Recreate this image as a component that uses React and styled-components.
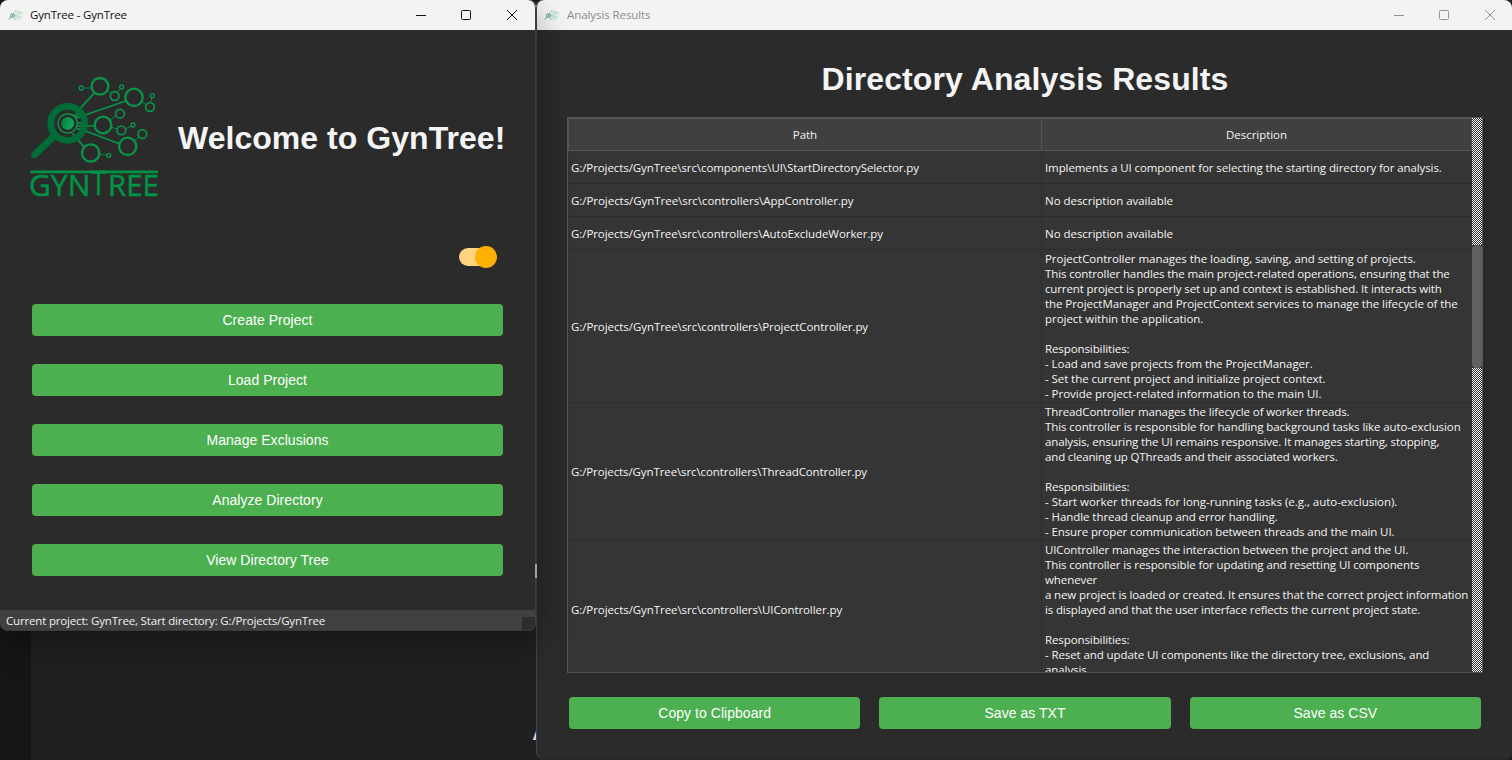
import React from "react";
import styled, { createGlobalStyle, css } from "styled-components";

const GlobalStyle = createGlobalStyle`
  * { box-sizing: border-box; }
  body { margin: 0; background: #202020; overflow: hidden; }
`;

const uiFont = css`
  font-family: "Open Sans", "Noto Sans", sans-serif;
  font-size: 11.5px;
`;

const Desktop = styled.div`
  position: relative;
  width: 1512px;
  height: 760px;
  overflow: hidden;
  background: linear-gradient(90deg, #161616 31px, #202020 31px);
`;

const BackgroundLetter = styled.div`
  position: absolute;
  left: 532px;
  top: 714px;
  font: bold 28px/34px "Liberation Sans", sans-serif;
  color: #cfcfcf;
`;

const BackgroundScroll = styled.div`
  position: absolute;
  left: 535px;
  top: 564px;
  width: 2px;
  height: 14px;
  background: #a0a0a0;
`;

const Window = styled.section`
  position: absolute;
  top: 0;
  display: flex;
  flex-direction: column;
  overflow: hidden;
  border-radius: 8px;
  background: #2b2b2b;

  &::after {
    content: "";
    position: absolute;
    inset: 0;
    border-radius: 8px;
    pointer-events: none;
  }
`;

const MainWindow = styled(Window)`
  left: 0;
  width: 536px;
  height: 631px;
  box-shadow: 0 12px 32px rgba(0, 0, 0, 0.36);

  &::after {
    border-right: 1px solid #3f3f3f;
    border-bottom: 1px solid #3b3b3b;
  }
`;

const ResultsWindow = styled(Window)`
  left: 536px;
  width: 976px;
  height: 760px;

  &::after {
    border-left: 1px solid #444;
    border-bottom: 1px solid #2a2224;
  }
`;

const TitleBar = styled.header`
  display: flex;
  align-items: center;
  flex: none;
  height: 30px;
  padding: 0 ${(p) => (p.$active ? 19 : 17)}px 0 8px;
  background: #f3f3f3;
  color: ${(p) => (p.$active ? "#111" : "#8c8c8c")};
`;

const TitleText = styled.span`
  ${uiFont}
  flex: 1;
  margin-left: ${(p) => p.$gap}px;
  line-height: 30px;
  height: 30px;
  letter-spacing: ${(p) => p.$track}px;
  white-space: pre;
`;

const WindowControls = styled.svg`
  display: block;
  width: 103px;
  height: 12px;
  margin-bottom: 1px;
  fill: none;
  stroke: ${(p) => (p.$active ? "#111" : "#929292")};
`;

const Hero = styled.div`
  display: flex;
  align-items: center;
  height: 140px;
  margin: 35px 0 0 20px;
`;

const LogoArt = styled.svg`
  display: block;
  width: ${(p) => p.$w}px;
  height: ${(p) => p.$h}px;
  flex: none;
`;

const Heading = styled.h1`
  margin: 0;
  font: bold 32px/40px "Liberation Sans", Arial, sans-serif;
  color: #f4f4f4;
  white-space: nowrap;
`;

const HeroHeading = styled(Heading)`
  margin: 5px 0 0 8px;
  letter-spacing: 0.04px;
`;

const ToggleRow = styled.div`
  display: flex;
  justify-content: flex-end;
  height: 99px;
  padding: 41px 39px 0 0;
`;

const Toggle = styled.div`
  display: flex;
  height: 22px;
`;

const ToggleTrack = styled.div`
  width: 36px;
  height: 18px;
  margin: 2px -20px 0 0;
  border-radius: 9px;
  background: #ffd37f;
`;

const ToggleKnob = styled.div`
  width: 22px;
  height: 22px;
  border-radius: 50%;
  background: #ffb000;
`;

const Button = styled.button`
  height: 32px;
  padding: 0;
  border: 0;
  border-radius: 4px;
  background: #4caf50;
  color: #fff;
  font: 14px/32px "Liberation Sans", Arial, sans-serif;
  letter-spacing: 0.04px;
`;

const ActionList = styled.nav`
  display: flex;
  flex-direction: column;
  gap: 28px;
  padding: 0 33px 0 32px;
`;

const StatusBar = styled.footer`
  ${uiFont}
  display: flex;
  justify-content: space-between;
  align-items: flex-end;
  height: 21px;
  margin-top: auto;
  padding: 0 1px 1px 6px;
  line-height: 19px;
  letter-spacing: -0.17px;
  color: #f0f0f0;
  background: #414141;
  white-space: pre;
`;

const SizeGrip = styled.div`
  width: 13px;
  height: 13px;
  background: #2d2d2d;
`;

const ResultsBody = styled.main`
  display: flex;
  flex-direction: column;
  flex: 1;
  padding: 29px 29px 31px 31px;
`;

const ResultsHeading = styled(Heading)`
  text-align: center;
  letter-spacing: 0.1px;
`;

const TableFrame = styled.div`
  display: flex;
  flex: none;
  height: 556px;
  margin-top: 18px;
  border: 1px solid #555;
  background: #353535;
`;

const Table = styled.div`
  flex: 1;
  height: 554px;
  overflow: hidden;
  color: #f4f4f4;
  ${uiFont}
`;

const TableRow = styled.div`
  display: grid;
  grid-template-columns: 474px 430px;
  height: ${(p) => p.$h}px;
`;

const HeaderCell = styled.div`
  display: flex;
  align-items: center;
  justify-content: center;
  padding-bottom: 1px;
  border: solid #555;
  border-width: 1px 1px 1px ${(p) => (p.$first ? 1 : 0)}px;
  background: #404040;
  letter-spacing: -0.05px;
`;

const Cell = styled.div`
  display: flex;
  flex-direction: column;
  justify-content: ${(p) => (p.$top ? "flex-start" : "center")};
  min-width: 0;
  overflow: hidden;
  padding: ${(p) => (p.$top ? "1px" : "0")} 0 0 3px;
  border-bottom: 1px solid #2d2d2d;
  border-right: ${(p) => (p.$last ? 0 : 1)}px solid #2d2d2d;
`;

const Line = styled.div`
  flex: none;
  height: 15px;
  line-height: 15px;
  letter-spacing: ${(p) => p.$track - 0.014}px;
  white-space: pre;
`;

const ScrollTrack = styled.div`
  width: 10px;
  height: 554px;
  padding-top: 127px;
  background: repeating-conic-gradient(#2b2b2b 0 25%, #fff 0 50%) 0 0 / 2px 2px;
`;

const ScrollThumb = styled.div`
  height: 123px;
  background: #2b2b2b;

  &::before {
    content: "";
    display: block;
    height: 100%;
    border-radius: 4px;
    background: #606060;
  }
`;

const ExportRow = styled.div`
  display: grid;
  grid-template-columns: repeat(3, 1fr);
  gap: 19px;
  margin-top: 24px;
  padding: 0 2px;
`;

const nodes = [
  [240, 64, 25, 7], [184, 69, 6, 4], [284, 93, 13, 5], [305, 66, 6, 4],
  [342, 97, 26, 7], [390, 126, 13, 5], [397, 92, 6, 4],
  [249, 180, 25, 7], [300, 146, 13, 5], [304, 196, 13, 5], [339, 180, 6, 4],
  [323, 244, 26, 7], [367, 207, 13, 5], [212, 264, 26, 7], [266, 271, 6, 4],
];

function TreeMark({ small }) {
  return (
    <g fill="none" stroke="#079549" opacity={small ? 0.75 : 1}>
      <g strokeWidth="5">
        <path d="M167 145L222 85M163 158l14-14M172 158l17-6L317 108M172 174h24M172 183h52M171 191l18 4L298 236M157 205l36 42" />
        <path d="M160 148l12 12M198 148l-13-2" strokeWidth="4" />
      </g>
      <path
        strokeWidth="2.5"
        d="M191 69h24M262 77l11 8M291 82l10-11M365 110l14 9M392 113l3-14M271 164l17-11M274 187l17 5M317 191l15-7M345 226l11-10M238 267l22 3"
      />
      {nodes.map(([x, y, r, w]) => (
        <circle key={`${x}-${y}`} cx={x} cy={y} r={r} strokeWidth={w} />
      ))}
      <path d="M102 213L44 269" stroke="#006d38" strokeWidth="21" strokeLinecap="round" />
      <circle cx="143" cy="175" r="51" stroke="#006d38" strokeWidth="20" />
      <circle cx="143" cy="175" r="29" strokeWidth="4.5" />
      <circle cx="143" cy="175" r="19" fill={small ? "#079549" : "url(#lens)"} stroke="none" />
    </g>
  );
}

function Logo() {
  return (
    <LogoArt $w={150} $h={140} viewBox="0 0 450 420">
      <defs>
        <linearGradient id="lens" x1="0" x2="1" y1="0" y2="0.4">
          <stop offset="0" stopColor="#007a3c" />
          <stop offset="1" stopColor="#10a858" />
        </linearGradient>
      </defs>
      <TreeMark />
      <path d="M31 316.5h383v8.5H31z" fill="#009245" />
      <g fill="#009245" stroke="#009245" strokeWidth="1.5" fontFamily="Open Sans, sans-serif">
        <text x="27" y="394" fontSize="87" textLength="184" lengthAdjust="spacingAndGlyphs">GYN</text>
        <text x="212" y="391" fontSize="101" textLength="47" lengthAdjust="spacingAndGlyphs">T</text>
        <text x="264" y="394" fontSize="87" textLength="153" lengthAdjust="spacingAndGlyphs">REE</text>
      </g>
    </LogoArt>
  );
}

function AppIcon() {
  return (
    <LogoArt $w={15} $h={12} viewBox="25 28 390 265">
      <TreeMark small />
    </LogoArt>
  );
}

function Controls({ active }) {
  return (
    <WindowControls $active={active} viewBox="0 0 103 12">
      <path d="M2 6.5h10" />
      <rect x="47.5" y="1.5" width="9" height="9" rx="1" />
      <path d="M93 1l10 10M103 1L93 11" />
    </WindowControls>
  );
}

const base = "G:/Projects/GynTree\\src\\";
const rows = [
  { h: 33, path: ["components\\UI\\StartDirectorySelector.py", -0.073],
    lines: [["Implements a UI component for selecting the starting directory for analysis.", -0.077]] },
  { h: 33, path: ["controllers\\AppController.py", -0.032], lines: [["No description available", -0.019]] },
  { h: 33, path: ["controllers\\AutoExcludeWorker.py", -0.055], lines: [["No description available", -0.019]] },
  { h: 153, top: true, path: ["controllers\\ProjectController.py", -0.059],
    lines: [
      ["ProjectController manages the loading, saving, and setting of projects.", -0.038],
      ["This controller handles the main project-related operations, ensuring that the", -0.109],
      ["current project is properly set up and context is established. It interacts with", -0.12],
      ["the ProjectManager and ProjectContext services to manage the lifecycle of the", -0.05],
      ["project within the application.", -0.016],
      ["", 0],
      ["Responsibilities:", -0.079],
      ["- Load and save projects from the ProjectManager.", -0.044],
      ["- Set the current project and initialize project context.", -0.055],
      ["- Provide project-related information to the main UI.", -0.02],
    ] },
  { h: 138, top: true, path: ["controllers\\ThreadController.py", -0.087],
    lines: [
      ["ThreadController manages the lifecycle of worker threads.", -0.102],
      ["This controller is responsible for handling background tasks like auto-exclusion", -0.065],
      ["analysis, ensuring the UI remains responsive. It manages starting, stopping,", -0.1],
      ["and cleaning up QThreads and their associated workers.", -0.142],
      ["", 0],
      ["Responsibilities:", -0.079],
      ["- Start worker threads for long-running tasks (e.g., auto-exclusion).", -0.01],
      ["- Handle thread cleanup and error handling.", -0.056],
      ["- Ensure proper communication between threads and the main UI.", -0.085],
    ] },
  { h: 138, top: true, path: ["controllers\\UIController.py", -0.067],
    lines: [
      ["UIController manages the interaction between the project and the UI.", -0.101],
      ["This controller is responsible for updating and resetting UI components", -0.09],
      ["whenever", -0.068],
      ["a new project is loaded or created. It ensures that the correct project information", -0.116],
      ["is displayed and that the user interface reflects the current project state.", -0.14],
      ["", 0],
      ["Responsibilities:", -0.079],
      ["- Reset and update UI components like the directory tree, exclusions, and", -0.083],
      ["analysis", -0.072],
    ] },
];

const actions = ["Create Project", "Load Project", "Manage Exclusions", "Analyze Directory", "View Directory Tree"];
const exportActions = ["Copy to Clipboard", "Save as TXT", "Save as CSV"];

export default function App() {
  return (
    <Desktop>
      <GlobalStyle />
      <BackgroundLetter>A</BackgroundLetter>
      <ResultsWindow>
        <TitleBar>
          <AppIcon />
          <TitleText $gap={8} $track={-0.08}>Analysis Results</TitleText>
          <Controls />
        </TitleBar>
        <ResultsBody>
          <ResultsHeading>Directory Analysis Results</ResultsHeading>
          <TableFrame>
            <Table>
              <TableRow $h={33}>
                <HeaderCell $first>Path</HeaderCell>
                <HeaderCell>Description</HeaderCell>
              </TableRow>
              {rows.map((row) => (
                <TableRow key={row.path[0]} $h={row.h}>
                  <Cell>
                    <Line $track={row.path[1]}>{base + row.path[0]}</Line>
                  </Cell>
                  <Cell $last $top={row.top}>
                    {row.lines.map(([text, track], i) => (
                      <Line key={i} $track={track}>{text}</Line>
                    ))}
                  </Cell>
                </TableRow>
              ))}
            </Table>
            <ScrollTrack>
              <ScrollThumb />
            </ScrollTrack>
          </TableFrame>
          <ExportRow>
            {exportActions.map((label) => (
              <Button key={label}>{label}</Button>
            ))}
          </ExportRow>
        </ResultsBody>
      </ResultsWindow>
      <MainWindow>
        <TitleBar $active>
          <AppIcon />
          <TitleText $gap={7} $track={-0.18}>GynTree - GynTree</TitleText>
          <Controls active />
        </TitleBar>
        <Hero>
          <Logo />
          <HeroHeading>Welcome to GynTree!</HeroHeading>
        </Hero>
        <ToggleRow>
          <Toggle>
            <ToggleTrack />
            <ToggleKnob />
          </Toggle>
        </ToggleRow>
        <ActionList>
          {actions.map((label) => (
            <Button key={label}>{label}</Button>
          ))}
        </ActionList>
        <StatusBar>
          Current project: GynTree, Start directory: G:/Projects/GynTree
          <SizeGrip />
        </StatusBar>
      </MainWindow>
      <BackgroundScroll />
    </Desktop>
  );
}
